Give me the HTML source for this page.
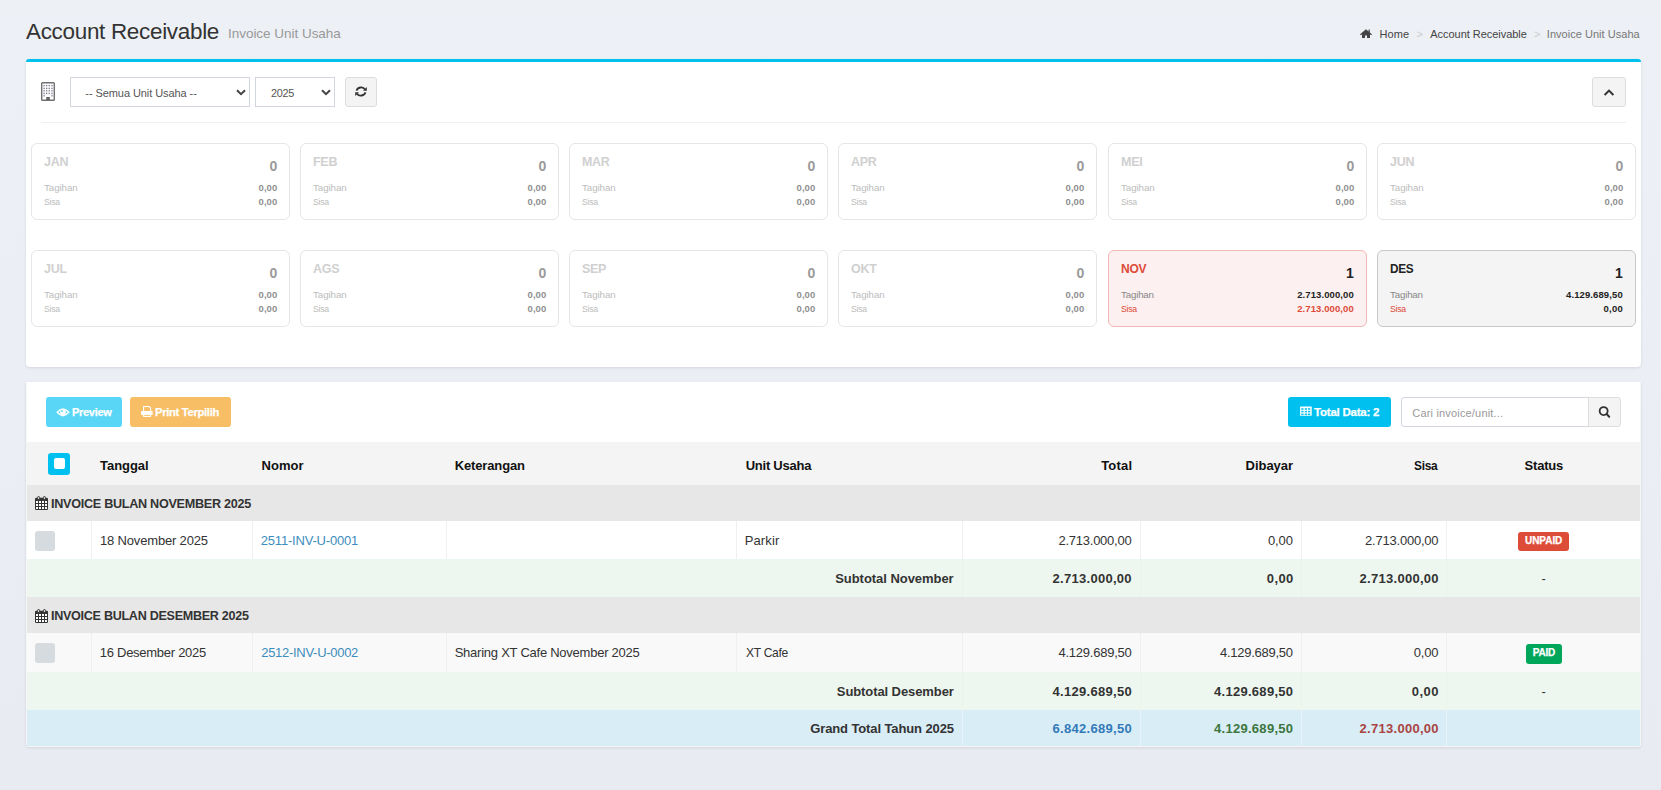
<!DOCTYPE html>
<html><head><meta charset="utf-8"><title>Account Receivable - Invoice Unit Usaha</title>
<style>
html,body{margin:0;padding:0;}
body{width:1661px;height:790px;overflow:hidden;position:relative;background:linear-gradient(to bottom,#edf0f5 0%,#ebeef5 45%,#e9ebf3 100%);font-family:"Liberation Sans", sans-serif;}
div{position:absolute;}
.t{white-space:nowrap;}
svg{position:absolute;}
</style></head><body>
<div class="t" style="left:26.30px;top:17.5px;font-size:22.5px;line-height:27.0px;color:#333;letter-spacing:-0.300px;transform:scaleX(0.9977);transform-origin:0.00px 0;">Account Receivable</div>
<div class="t" style="left:228.00px;top:25.72px;font-size:13.5px;line-height:16.2px;color:#999;letter-spacing:-0.029px;">Invoice Unit Usaha</div>
<svg style="left:1360px;top:29px" width="12" height="9" viewBox="0 0 12 9"><path d="M6 0.2 L0 5.3 L0.9 6.2 L2 5.3 V9 H5 V6.4 H7 V9 H10 V5.3 L11.1 6.2 L12 5.3 L9.8 3.4 V0.6 H8.6 V2.4 Z" fill="#444"/></svg>
<div class="t" style="left:1379.40px;top:28.39px;font-size:11px;line-height:13.2px;color:#444;letter-spacing:0.092px;">Home</div>
<div class="t" style="left:1416.50px;top:28.19px;font-size:11px;line-height:13.2px;color:#ccc;">&gt;</div>
<div class="t" style="left:1430.30px;top:28.39px;font-size:11px;line-height:13.2px;color:#444;letter-spacing:-0.041px;">Account Receivable</div>
<div class="t" style="left:1534.00px;top:28.19px;font-size:11px;line-height:13.2px;color:#ccc;">&gt;</div>
<div class="t" style="left:1546.80px;top:28.39px;font-size:11px;line-height:13.2px;color:#777;letter-spacing:0.035px;">Invoice Unit Usaha</div>
<div style="position:absolute;left:26px;top:59px;width:1615px;height:308px;background:#fff;border-top:3px solid #00c0ef;border-radius:3px 3px 4px 4px;box-shadow:0 1px 3px rgba(0,0,0,0.1);box-sizing:border-box;"></div>
<svg style="left:41px;top:82px" width="14" height="19" viewBox="0 0 14 19"><rect x="0.7" y="0.75" width="12.6" height="17.5" rx="0.8" fill="#fff" stroke="#707070" stroke-width="1.4"/><rect x="2.45" y="2.90" width="1.3" height="1.4" fill="#7a7a92"/><rect x="5.05" y="2.90" width="1.3" height="1.4" fill="#7a7a92"/><rect x="7.55" y="2.90" width="1.3" height="1.4" fill="#7a7a92"/><rect x="10.35" y="2.90" width="1.3" height="1.4" fill="#7a7a92"/><rect x="2.45" y="5.70" width="1.3" height="1.4" fill="#7a7a92"/><rect x="5.05" y="5.70" width="1.3" height="1.4" fill="#7a7a92"/><rect x="7.55" y="5.70" width="1.3" height="1.4" fill="#7a7a92"/><rect x="10.35" y="5.70" width="1.3" height="1.4" fill="#7a7a92"/><rect x="2.45" y="8.10" width="1.3" height="1.4" fill="#7a7a92"/><rect x="5.05" y="8.10" width="1.3" height="1.4" fill="#7a7a92"/><rect x="7.55" y="8.10" width="1.3" height="1.4" fill="#7a7a92"/><rect x="10.35" y="8.10" width="1.3" height="1.4" fill="#7a7a92"/><rect x="2.45" y="10.70" width="1.3" height="1.4" fill="#7a7a92"/><rect x="5.05" y="10.70" width="1.3" height="1.4" fill="#7a7a92"/><rect x="7.55" y="10.70" width="1.3" height="1.4" fill="#7a7a92"/><rect x="10.35" y="10.70" width="1.3" height="1.4" fill="#7a7a92"/><rect x="2.45" y="13.10" width="1.3" height="1.4" fill="#7a7a92"/><rect x="10.35" y="13.10" width="1.3" height="1.4" fill="#7a7a92"/><rect x="5.2" y="15" width="3.7" height="3.2" fill="#666"/></svg>
<div style="position:absolute;left:70px;top:77px;width:180px;height:30px;background:#fff;border:1px solid #d2d6de;box-sizing:border-box;"></div>
<div class="t" style="left:85.30px;top:86.59px;font-size:11px;line-height:13.2px;color:#555;letter-spacing:-0.073px;">-- Semua Unit Usaha --</div>
<svg style="left:236px;top:89px" width="10" height="7" viewBox="0 0 10 7"><path d="M1 1.2 L5 5.2 L9 1.2" fill="none" stroke="#444" stroke-width="2"/></svg>
<div style="position:absolute;left:255px;top:77px;width:80px;height:30px;background:#fff;border:1px solid #d2d6de;box-sizing:border-box;"></div>
<div class="t" style="left:270.50px;top:86.59px;font-size:11px;line-height:13.2px;color:#555;letter-spacing:-0.300px;transform:scaleX(0.9892);transform-origin:0.00px 0;">2025</div>
<svg style="left:321px;top:89px" width="10" height="7" viewBox="0 0 10 7"><path d="M1 1.2 L5 5.2 L9 1.2" fill="none" stroke="#444" stroke-width="2"/></svg>
<div style="position:absolute;left:345px;top:77px;width:32px;height:30px;background:#f4f4f4;border:1px solid #ddd;border-radius:3px;box-sizing:border-box;"></div>
<svg style="left:355px;top:86px" width="12" height="11" viewBox="0 0 12 11"><path d="M1.6 4.6 C2.4 1.2 8 0 9.9 3.4" fill="none" stroke="#333" stroke-width="1.9"/><path d="M11.8 0.9 L11.8 4.7 L8 4.7 Z" fill="#333"/><path d="M10.4 6.4 C9.6 9.8 4 11 2.1 7.6" fill="none" stroke="#333" stroke-width="1.9"/><path d="M0.2 10.1 L0.2 6.3 L4 6.3 Z" fill="#333"/></svg>
<div style="position:absolute;left:1592px;top:77px;width:34px;height:30px;background:#f4f4f4;border:1px solid #ddd;border-radius:3px;box-sizing:border-box;"></div>
<svg style="left:1603px;top:88px" width="12" height="9" viewBox="0 0 12 9"><path d="M1.6 7 L6 2.6 L10.4 7" fill="none" stroke="#333" stroke-width="2"/></svg>
<div style="position:absolute;left:41px;top:122px;width:1585px;height:1px;background:#f0f0f0;"></div>
<div style="position:absolute;left:31px;top:143px;width:259px;height:77px;background:#fff;border:1px solid #e6e6e6;border-radius:6px;box-sizing:border-box;"></div>
<div class="t" style="left:44.00px;top:153.7px;font-size:13px;line-height:15.6px;font-weight:700;color:#d0d0d0;letter-spacing:-0.300px;transform:scaleX(0.9625);transform-origin:0.00px 0;">JAN</div>
<div class="t" style="left:269.40px;top:157.55px;font-size:14px;line-height:16.8px;font-weight:700;color:#9a9a9a;">0</div>
<div class="t" style="left:44.00px;top:181.87px;font-size:9.75px;line-height:11.7px;color:#bcbcbc;letter-spacing:-0.072px;">Tagihan</div>
<div class="t" style="left:258.50px;top:182.11px;font-size:9.5px;line-height:11.4px;font-weight:700;color:#8f8f8f;letter-spacing:0.098px;">0,00</div>
<div class="t" style="left:44.00px;top:195.87px;font-size:9.75px;line-height:11.7px;color:#bcbcbc;letter-spacing:-0.300px;transform:scaleX(0.8904);transform-origin:0.00px 0;">Sisa</div>
<div class="t" style="left:258.50px;top:196.11px;font-size:9.5px;line-height:11.4px;font-weight:700;color:#8f8f8f;letter-spacing:0.098px;">0,00</div>
<div style="position:absolute;left:300px;top:143px;width:259px;height:77px;background:#fff;border:1px solid #e6e6e6;border-radius:6px;box-sizing:border-box;"></div>
<div class="t" style="left:313.00px;top:153.7px;font-size:13px;line-height:15.6px;font-weight:700;color:#d0d0d0;letter-spacing:-0.300px;transform:scaleX(0.9625);transform-origin:0.00px 0;">FEB</div>
<div class="t" style="left:538.40px;top:157.55px;font-size:14px;line-height:16.8px;font-weight:700;color:#9a9a9a;">0</div>
<div class="t" style="left:313.00px;top:181.87px;font-size:9.75px;line-height:11.7px;color:#bcbcbc;letter-spacing:-0.072px;">Tagihan</div>
<div class="t" style="left:527.50px;top:182.11px;font-size:9.5px;line-height:11.4px;font-weight:700;color:#8f8f8f;letter-spacing:0.098px;">0,00</div>
<div class="t" style="left:313.00px;top:195.87px;font-size:9.75px;line-height:11.7px;color:#bcbcbc;letter-spacing:-0.300px;transform:scaleX(0.8904);transform-origin:0.00px 0;">Sisa</div>
<div class="t" style="left:527.50px;top:196.11px;font-size:9.5px;line-height:11.4px;font-weight:700;color:#8f8f8f;letter-spacing:0.098px;">0,00</div>
<div style="position:absolute;left:569px;top:143px;width:259px;height:77px;background:#fff;border:1px solid #e6e6e6;border-radius:6px;box-sizing:border-box;"></div>
<div class="t" style="left:582.00px;top:153.7px;font-size:13px;line-height:15.6px;font-weight:700;color:#d0d0d0;letter-spacing:-0.300px;transform:scaleX(0.9590);transform-origin:0.00px 0;">MAR</div>
<div class="t" style="left:807.40px;top:157.55px;font-size:14px;line-height:16.8px;font-weight:700;color:#9a9a9a;">0</div>
<div class="t" style="left:582.00px;top:181.87px;font-size:9.75px;line-height:11.7px;color:#bcbcbc;letter-spacing:-0.072px;">Tagihan</div>
<div class="t" style="left:796.50px;top:182.11px;font-size:9.5px;line-height:11.4px;font-weight:700;color:#8f8f8f;letter-spacing:0.098px;">0,00</div>
<div class="t" style="left:582.00px;top:195.87px;font-size:9.75px;line-height:11.7px;color:#bcbcbc;letter-spacing:-0.300px;transform:scaleX(0.8904);transform-origin:0.00px 0;">Sisa</div>
<div class="t" style="left:796.50px;top:196.11px;font-size:9.5px;line-height:11.4px;font-weight:700;color:#8f8f8f;letter-spacing:0.098px;">0,00</div>
<div style="position:absolute;left:838px;top:143px;width:259px;height:77px;background:#fff;border:1px solid #e6e6e6;border-radius:6px;box-sizing:border-box;"></div>
<div class="t" style="left:851.00px;top:153.7px;font-size:13px;line-height:15.6px;font-weight:700;color:#d0d0d0;letter-spacing:-0.300px;transform:scaleX(0.9605);transform-origin:0.00px 0;">APR</div>
<div class="t" style="left:1076.40px;top:157.55px;font-size:14px;line-height:16.8px;font-weight:700;color:#9a9a9a;">0</div>
<div class="t" style="left:851.00px;top:181.87px;font-size:9.75px;line-height:11.7px;color:#bcbcbc;letter-spacing:-0.072px;">Tagihan</div>
<div class="t" style="left:1065.50px;top:182.11px;font-size:9.5px;line-height:11.4px;font-weight:700;color:#8f8f8f;letter-spacing:0.098px;">0,00</div>
<div class="t" style="left:851.00px;top:195.87px;font-size:9.75px;line-height:11.7px;color:#bcbcbc;letter-spacing:-0.300px;transform:scaleX(0.8904);transform-origin:0.00px 0;">Sisa</div>
<div class="t" style="left:1065.50px;top:196.11px;font-size:9.5px;line-height:11.4px;font-weight:700;color:#8f8f8f;letter-spacing:0.098px;">0,00</div>
<div style="position:absolute;left:1108px;top:143px;width:259px;height:77px;background:#fff;border:1px solid #e6e6e6;border-radius:6px;box-sizing:border-box;"></div>
<div class="t" style="left:1121.00px;top:153.7px;font-size:13px;line-height:15.6px;font-weight:700;color:#d0d0d0;letter-spacing:-0.300px;transform:scaleX(0.9658);transform-origin:0.00px 0;">MEI</div>
<div class="t" style="left:1346.40px;top:157.55px;font-size:14px;line-height:16.8px;font-weight:700;color:#9a9a9a;">0</div>
<div class="t" style="left:1121.00px;top:181.87px;font-size:9.75px;line-height:11.7px;color:#bcbcbc;letter-spacing:-0.072px;">Tagihan</div>
<div class="t" style="left:1335.50px;top:182.11px;font-size:9.5px;line-height:11.4px;font-weight:700;color:#8f8f8f;letter-spacing:0.098px;">0,00</div>
<div class="t" style="left:1121.00px;top:195.87px;font-size:9.75px;line-height:11.7px;color:#bcbcbc;letter-spacing:-0.300px;transform:scaleX(0.8904);transform-origin:0.00px 0;">Sisa</div>
<div class="t" style="left:1335.50px;top:196.11px;font-size:9.5px;line-height:11.4px;font-weight:700;color:#8f8f8f;letter-spacing:0.098px;">0,00</div>
<div style="position:absolute;left:1377px;top:143px;width:259px;height:77px;background:#fff;border:1px solid #e6e6e6;border-radius:6px;box-sizing:border-box;"></div>
<div class="t" style="left:1390.00px;top:153.7px;font-size:13px;line-height:15.6px;font-weight:700;color:#d0d0d0;letter-spacing:-0.300px;transform:scaleX(0.9625);transform-origin:0.00px 0;">JUN</div>
<div class="t" style="left:1615.40px;top:157.55px;font-size:14px;line-height:16.8px;font-weight:700;color:#9a9a9a;">0</div>
<div class="t" style="left:1390.00px;top:181.87px;font-size:9.75px;line-height:11.7px;color:#bcbcbc;letter-spacing:-0.072px;">Tagihan</div>
<div class="t" style="left:1604.50px;top:182.11px;font-size:9.5px;line-height:11.4px;font-weight:700;color:#8f8f8f;letter-spacing:0.098px;">0,00</div>
<div class="t" style="left:1390.00px;top:195.87px;font-size:9.75px;line-height:11.7px;color:#bcbcbc;letter-spacing:-0.300px;transform:scaleX(0.8904);transform-origin:0.00px 0;">Sisa</div>
<div class="t" style="left:1604.50px;top:196.11px;font-size:9.5px;line-height:11.4px;font-weight:700;color:#8f8f8f;letter-spacing:0.098px;">0,00</div>
<div style="position:absolute;left:31px;top:250px;width:259px;height:77px;background:#fff;border:1px solid #e6e6e6;border-radius:6px;box-sizing:border-box;"></div>
<div class="t" style="left:44.00px;top:260.7px;font-size:13px;line-height:15.6px;font-weight:700;color:#d0d0d0;letter-spacing:-0.300px;transform:scaleX(0.9635);transform-origin:0.00px 0;">JUL</div>
<div class="t" style="left:269.40px;top:264.55px;font-size:14px;line-height:16.8px;font-weight:700;color:#9a9a9a;">0</div>
<div class="t" style="left:44.00px;top:288.87px;font-size:9.75px;line-height:11.7px;color:#bcbcbc;letter-spacing:-0.072px;">Tagihan</div>
<div class="t" style="left:258.50px;top:289.11px;font-size:9.5px;line-height:11.4px;font-weight:700;color:#8f8f8f;letter-spacing:0.098px;">0,00</div>
<div class="t" style="left:44.00px;top:302.87px;font-size:9.75px;line-height:11.7px;color:#bcbcbc;letter-spacing:-0.300px;transform:scaleX(0.8904);transform-origin:0.00px 0;">Sisa</div>
<div class="t" style="left:258.50px;top:303.11px;font-size:9.5px;line-height:11.4px;font-weight:700;color:#8f8f8f;letter-spacing:0.098px;">0,00</div>
<div style="position:absolute;left:300px;top:250px;width:259px;height:77px;background:#fff;border:1px solid #e6e6e6;border-radius:6px;box-sizing:border-box;"></div>
<div class="t" style="left:313.00px;top:260.7px;font-size:13px;line-height:15.6px;font-weight:700;color:#d0d0d0;letter-spacing:-0.300px;transform:scaleX(0.9602);transform-origin:0.00px 0;">AGS</div>
<div class="t" style="left:538.40px;top:264.55px;font-size:14px;line-height:16.8px;font-weight:700;color:#9a9a9a;">0</div>
<div class="t" style="left:313.00px;top:288.87px;font-size:9.75px;line-height:11.7px;color:#bcbcbc;letter-spacing:-0.072px;">Tagihan</div>
<div class="t" style="left:527.50px;top:289.11px;font-size:9.5px;line-height:11.4px;font-weight:700;color:#8f8f8f;letter-spacing:0.098px;">0,00</div>
<div class="t" style="left:313.00px;top:302.87px;font-size:9.75px;line-height:11.7px;color:#bcbcbc;letter-spacing:-0.300px;transform:scaleX(0.8904);transform-origin:0.00px 0;">Sisa</div>
<div class="t" style="left:527.50px;top:303.11px;font-size:9.5px;line-height:11.4px;font-weight:700;color:#8f8f8f;letter-spacing:0.098px;">0,00</div>
<div style="position:absolute;left:569px;top:250px;width:259px;height:77px;background:#fff;border:1px solid #e6e6e6;border-radius:6px;box-sizing:border-box;"></div>
<div class="t" style="left:582.00px;top:260.7px;font-size:13px;line-height:15.6px;font-weight:700;color:#d0d0d0;letter-spacing:-0.300px;transform:scaleX(0.9619);transform-origin:0.00px 0;">SEP</div>
<div class="t" style="left:807.40px;top:264.55px;font-size:14px;line-height:16.8px;font-weight:700;color:#9a9a9a;">0</div>
<div class="t" style="left:582.00px;top:288.87px;font-size:9.75px;line-height:11.7px;color:#bcbcbc;letter-spacing:-0.072px;">Tagihan</div>
<div class="t" style="left:796.50px;top:289.11px;font-size:9.5px;line-height:11.4px;font-weight:700;color:#8f8f8f;letter-spacing:0.098px;">0,00</div>
<div class="t" style="left:582.00px;top:302.87px;font-size:9.75px;line-height:11.7px;color:#bcbcbc;letter-spacing:-0.300px;transform:scaleX(0.8904);transform-origin:0.00px 0;">Sisa</div>
<div class="t" style="left:796.50px;top:303.11px;font-size:9.5px;line-height:11.4px;font-weight:700;color:#8f8f8f;letter-spacing:0.098px;">0,00</div>
<div style="position:absolute;left:838px;top:250px;width:259px;height:77px;background:#fff;border:1px solid #e6e6e6;border-radius:6px;box-sizing:border-box;"></div>
<div class="t" style="left:851.00px;top:260.7px;font-size:13px;line-height:15.6px;font-weight:700;color:#d0d0d0;letter-spacing:-0.300px;transform:scaleX(0.9610);transform-origin:0.00px 0;">OKT</div>
<div class="t" style="left:1076.40px;top:264.55px;font-size:14px;line-height:16.8px;font-weight:700;color:#9a9a9a;">0</div>
<div class="t" style="left:851.00px;top:288.87px;font-size:9.75px;line-height:11.7px;color:#bcbcbc;letter-spacing:-0.072px;">Tagihan</div>
<div class="t" style="left:1065.50px;top:289.11px;font-size:9.5px;line-height:11.4px;font-weight:700;color:#8f8f8f;letter-spacing:0.098px;">0,00</div>
<div class="t" style="left:851.00px;top:302.87px;font-size:9.75px;line-height:11.7px;color:#bcbcbc;letter-spacing:-0.300px;transform:scaleX(0.8904);transform-origin:0.00px 0;">Sisa</div>
<div class="t" style="left:1065.50px;top:303.11px;font-size:9.5px;line-height:11.4px;font-weight:700;color:#8f8f8f;letter-spacing:0.098px;">0,00</div>
<div style="position:absolute;left:1108px;top:250px;width:259px;height:77px;background:#fcf0f0;border:1px solid #f2b8b5;border-radius:6px;box-sizing:border-box;"></div>
<div class="t" style="left:1121.00px;top:260.7px;font-size:13px;line-height:15.6px;font-weight:700;color:#dd4b39;letter-spacing:-0.300px;transform:scaleX(0.9247);transform-origin:0.00px 0;">NOV</div>
<div class="t" style="left:1346.10px;top:264.55px;font-size:14px;line-height:16.8px;font-weight:700;color:#222;">1</div>
<div class="t" style="left:1121.00px;top:288.87px;font-size:9.75px;line-height:11.7px;color:#888;letter-spacing:-0.189px;">Tagihan</div>
<div class="t" style="left:1297.20px;top:289.11px;font-size:9.5px;line-height:11.4px;font-weight:700;color:#222;letter-spacing:0.092px;">2.713.000,00</div>
<div class="t" style="left:1121.00px;top:302.87px;font-size:9.75px;line-height:11.7px;color:#dd4b39;letter-spacing:-0.300px;transform:scaleX(0.8904);transform-origin:0.00px 0;">Sisa</div>
<div class="t" style="left:1297.20px;top:303.11px;font-size:9.5px;line-height:11.4px;font-weight:700;color:#dd4b39;letter-spacing:0.092px;">2.713.000,00</div>
<div style="position:absolute;left:1377px;top:250px;width:259px;height:77px;background:#f4f4f4;border:1px solid #c8c8c8;border-radius:6px;box-sizing:border-box;"></div>
<div class="t" style="left:1390.00px;top:260.7px;font-size:13px;line-height:15.6px;font-weight:700;color:#222;letter-spacing:-0.300px;transform:scaleX(0.9071);transform-origin:0.00px 0;">DES</div>
<div class="t" style="left:1615.10px;top:264.55px;font-size:14px;line-height:16.8px;font-weight:700;color:#222;">1</div>
<div class="t" style="left:1390.00px;top:288.87px;font-size:9.75px;line-height:11.7px;color:#888;letter-spacing:-0.189px;">Tagihan</div>
<div class="t" style="left:1566.00px;top:289.11px;font-size:9.5px;line-height:11.4px;font-weight:700;color:#222;letter-spacing:0.110px;">4.129.689,50</div>
<div class="t" style="left:1390.00px;top:302.87px;font-size:9.75px;line-height:11.7px;color:#dd4b39;letter-spacing:-0.300px;transform:scaleX(0.8904);transform-origin:0.00px 0;">Sisa</div>
<div class="t" style="left:1603.50px;top:303.11px;font-size:9.5px;line-height:11.4px;font-weight:700;color:#222;letter-spacing:0.231px;">0,00</div>
<div style="position:absolute;left:26px;top:382px;width:1615px;height:365px;background:#fff;border:1px solid #f6f6f6;border-top-color:#fff;border-radius:0 0 3px 3px;box-shadow:0 1px 3px rgba(0,0,0,0.1);box-sizing:border-box;"></div>
<div style="position:absolute;left:46px;top:397px;width:76px;height:30px;background:#59d6f5;border-radius:3px;"></div>
<svg style="left:56px;top:407.5px" width="14" height="9" viewBox="0 0 14 9"><path d="M1.2 4.3 Q7 -2.4 12.8 4.3 Q7 11 1.2 4.3 Z" fill="none" stroke="#fff" stroke-width="1.5"/><circle cx="7" cy="4.3" r="2.9" fill="#fff"/><circle cx="6" cy="3.2" r="0.9" fill="#59d6f5"/></svg>
<div class="t" style="left:71.50px;top:406.32px;font-size:11.5px;line-height:13.8px;font-weight:700;-webkit-text-stroke:0.25px #fff;color:#fff;letter-spacing:-0.300px;transform:scaleX(0.9538);transform-origin:0.00px 0;">Preview</div>
<div style="position:absolute;left:130px;top:397px;width:101px;height:30px;background:#f7be65;border-radius:3px;"></div>
<svg style="left:141px;top:406px" width="12" height="11" viewBox="0 0 12 11"><path d="M2.6 5.2 V0.55 H8.1 L9.6 2.05 V5.2" fill="none" stroke="#fff" stroke-width="1.1"/><rect x="0" y="4.9" width="11.7" height="4.1" rx="0.9" fill="#fff"/><circle cx="10.1" cy="6.1" r="0.45" fill="#f7be65"/><rect x="2.6" y="8.3" width="6.9" height="2.1" fill="#f7be65" stroke="#fff" stroke-width="1.1"/></svg>
<div class="t" style="left:155.30px;top:406.32px;font-size:11.5px;line-height:13.8px;font-weight:700;-webkit-text-stroke:0.25px #fff;color:#fff;letter-spacing:-0.300px;transform:scaleX(0.9721);transform-origin:0.00px 0;">Print Terpilih</div>
<div style="position:absolute;left:1288px;top:397px;width:103px;height:30px;background:#00c0ef;border-radius:3px;"></div>
<svg style="left:1300px;top:406px" width="12" height="10" viewBox="0 0 12 10"><rect x="0.1" y="0.6" width="11.6" height="9.2" rx="0.6" fill="#fff"/><rect x="1.25" y="2.25" width="2.3" height="1.5" fill="#00c0ef"/><rect x="1.25" y="4.85" width="2.3" height="1.5" fill="#00c0ef"/><rect x="1.25" y="7.55" width="2.3" height="1.5" fill="#00c0ef"/><rect x="4.75" y="2.25" width="2.3" height="1.5" fill="#00c0ef"/><rect x="4.75" y="4.85" width="2.3" height="1.5" fill="#00c0ef"/><rect x="4.75" y="7.55" width="2.3" height="1.5" fill="#00c0ef"/><rect x="7.95" y="2.25" width="2.3" height="1.5" fill="#00c0ef"/><rect x="7.95" y="4.85" width="2.3" height="1.5" fill="#00c0ef"/><rect x="7.95" y="7.55" width="2.3" height="1.5" fill="#00c0ef"/></svg>
<div class="t" style="left:1314.10px;top:405.82px;font-size:11.5px;line-height:13.8px;font-weight:700;-webkit-text-stroke:0.25px #fff;color:#fff;letter-spacing:-0.238px;">Total Data: 2</div>
<div style="position:absolute;left:1401px;top:397px;width:188px;height:30px;background:#fff;border:1px solid #d2d6de;border-radius:3px 0 0 3px;box-sizing:border-box;"></div>
<div style="position:absolute;left:1588px;top:397px;width:33px;height:30px;background:#f4f4f4;border:1px solid #ddd;border-radius:0 3px 3px 0;box-sizing:border-box;"></div>
<div class="t" style="left:1412.30px;top:406.59px;font-size:11px;line-height:13.2px;color:#999;letter-spacing:0.175px;">Cari invoice/unit...</div>
<svg style="left:1597px;top:405px" width="14" height="14" viewBox="0 0 14 14"><circle cx="6.65" cy="6.05" r="4.0" fill="none" stroke="#333" stroke-width="1.8"/><path d="M9.6 9.0 L12.2 11.7" stroke="#333" stroke-width="2" stroke-linecap="round"/></svg>
<div style="position:absolute;left:27px;top:442px;width:1613px;height:43px;background:#f4f4f4;"></div>
<div style="position:absolute;left:27px;top:485px;width:1613px;height:36px;background:#e7e7e7;"></div>
<div style="position:absolute;left:27px;top:521px;width:1613px;height:38px;background:#fff;"></div>
<div style="position:absolute;left:27px;top:559px;width:1613px;height:38px;background:#eef7ef;"></div>
<div style="position:absolute;left:27px;top:597px;width:1613px;height:36px;background:#e7e7e7;"></div>
<div style="position:absolute;left:27px;top:633px;width:1613px;height:39px;background:#f9f9f9;"></div>
<div style="position:absolute;left:27px;top:672px;width:1613px;height:38px;background:#eef7ef;"></div>
<div style="position:absolute;left:27px;top:710px;width:1613px;height:36px;background:#d9edf7;"></div>
<div style="position:absolute;left:91px;top:521px;width:1px;height:38px;background:#f0f0f0;"></div>
<div style="position:absolute;left:252px;top:521px;width:1px;height:38px;background:#f0f0f0;"></div>
<div style="position:absolute;left:446px;top:521px;width:1px;height:38px;background:#f0f0f0;"></div>
<div style="position:absolute;left:736px;top:521px;width:1px;height:38px;background:#f0f0f0;"></div>
<div style="position:absolute;left:962px;top:521px;width:1px;height:38px;background:#f0f0f0;"></div>
<div style="position:absolute;left:1140px;top:521px;width:1px;height:38px;background:#f0f0f0;"></div>
<div style="position:absolute;left:1301px;top:521px;width:1px;height:38px;background:#f0f0f0;"></div>
<div style="position:absolute;left:1446px;top:521px;width:1px;height:38px;background:#f0f0f0;"></div>
<div style="position:absolute;left:91px;top:633px;width:1px;height:39px;background:#f0f0f0;"></div>
<div style="position:absolute;left:252px;top:633px;width:1px;height:39px;background:#f0f0f0;"></div>
<div style="position:absolute;left:446px;top:633px;width:1px;height:39px;background:#f0f0f0;"></div>
<div style="position:absolute;left:736px;top:633px;width:1px;height:39px;background:#f0f0f0;"></div>
<div style="position:absolute;left:962px;top:633px;width:1px;height:39px;background:#f0f0f0;"></div>
<div style="position:absolute;left:1140px;top:633px;width:1px;height:39px;background:#f0f0f0;"></div>
<div style="position:absolute;left:1301px;top:633px;width:1px;height:39px;background:#f0f0f0;"></div>
<div style="position:absolute;left:1446px;top:633px;width:1px;height:39px;background:#f0f0f0;"></div>
<div style="position:absolute;left:962px;top:559px;width:1px;height:38px;background:#e9f2eb;"></div>
<div style="position:absolute;left:1140px;top:559px;width:1px;height:38px;background:#e9f2eb;"></div>
<div style="position:absolute;left:1301px;top:559px;width:1px;height:38px;background:#e9f2eb;"></div>
<div style="position:absolute;left:1446px;top:559px;width:1px;height:38px;background:#e9f2eb;"></div>
<div style="position:absolute;left:962px;top:672px;width:1px;height:38px;background:#e9f2eb;"></div>
<div style="position:absolute;left:1140px;top:672px;width:1px;height:38px;background:#e9f2eb;"></div>
<div style="position:absolute;left:1301px;top:672px;width:1px;height:38px;background:#e9f2eb;"></div>
<div style="position:absolute;left:1446px;top:672px;width:1px;height:38px;background:#e9f2eb;"></div>
<div style="position:absolute;left:962px;top:710px;width:1px;height:36px;background:#e8f2f8;"></div>
<div style="position:absolute;left:1140px;top:710px;width:1px;height:36px;background:#e8f2f8;"></div>
<div style="position:absolute;left:1301px;top:710px;width:1px;height:36px;background:#e8f2f8;"></div>
<div style="position:absolute;left:1446px;top:710px;width:1px;height:36px;background:#e8f2f8;"></div>
<div style="position:absolute;left:48px;top:453px;width:22px;height:22px;background:#00c0ef;border-radius:3px;"></div>
<div style="position:absolute;left:54px;top:458px;width:11px;height:11px;background:#fff;border-radius:2px;"></div>
<div class="t" style="left:100.10px;top:457.9px;font-size:13px;line-height:15.6px;font-weight:700;color:#111;letter-spacing:-0.060px;">Tanggal</div>
<div class="t" style="left:261.60px;top:457.9px;font-size:13px;line-height:15.6px;font-weight:700;color:#111;letter-spacing:0.018px;">Nomor</div>
<div class="t" style="left:454.80px;top:457.9px;font-size:13px;line-height:15.6px;font-weight:700;color:#111;letter-spacing:-0.153px;">Keterangan</div>
<div class="t" style="left:745.70px;top:457.9px;font-size:13px;line-height:15.6px;font-weight:700;color:#111;letter-spacing:-0.241px;">Unit Usaha</div>
<div class="t" style="left:1101.20px;top:457.9px;font-size:13px;line-height:15.6px;font-weight:700;color:#111;letter-spacing:0.181px;">Total</div>
<div class="t" style="left:1245.60px;top:457.9px;font-size:13px;line-height:15.6px;font-weight:700;color:#111;letter-spacing:-0.038px;">Dibayar</div>
<div class="t" style="left:1413.50px;top:457.9px;font-size:13px;line-height:15.6px;font-weight:700;color:#111;letter-spacing:-0.300px;transform:scaleX(0.9169);transform-origin:0.00px 0;">Sisa</div>
<div class="t" style="left:1524.60px;top:457.9px;font-size:13px;line-height:15.6px;font-weight:700;color:#111;letter-spacing:-0.200px;">Status</div>
<svg style="left:35px;top:496px" width="13" height="14" viewBox="0 0 13 14"><rect x="0" y="1.8" width="13" height="12.2" rx="1.2" fill="#333"/><rect x="1" y="5" width="2" height="2" fill="#fff"/><rect x="1" y="8" width="2" height="2" fill="#fff"/><rect x="1" y="11" width="2" height="2" fill="#fff"/><rect x="4" y="5" width="2" height="2" fill="#fff"/><rect x="4" y="8" width="2" height="2" fill="#fff"/><rect x="4" y="11" width="2" height="2" fill="#fff"/><rect x="7" y="5" width="2" height="2" fill="#fff"/><rect x="7" y="8" width="2" height="2" fill="#fff"/><rect x="7" y="11" width="2" height="2" fill="#fff"/><rect x="10" y="5" width="2" height="2" fill="#fff"/><rect x="10" y="8" width="2" height="2" fill="#fff"/><rect x="10" y="11" width="2" height="2" fill="#fff"/><rect x="2.6" y="0.5" width="2" height="3" rx="1" fill="#e7e7e7" stroke="#333" stroke-width="1"/><rect x="8.4" y="0.5" width="2" height="3" rx="1" fill="#e7e7e7" stroke="#333" stroke-width="1"/></svg>
<div class="t" style="left:51.00px;top:495.5px;font-size:13px;line-height:15.6px;font-weight:700;color:#333;letter-spacing:-0.300px;transform:scaleX(0.9719);transform-origin:0.00px 0;">INVOICE BULAN NOVEMBER 2025</div>
<svg style="left:35px;top:609px" width="13" height="14" viewBox="0 0 13 14"><rect x="0" y="1.8" width="13" height="12.2" rx="1.2" fill="#333"/><rect x="1" y="5" width="2" height="2" fill="#fff"/><rect x="1" y="8" width="2" height="2" fill="#fff"/><rect x="1" y="11" width="2" height="2" fill="#fff"/><rect x="4" y="5" width="2" height="2" fill="#fff"/><rect x="4" y="8" width="2" height="2" fill="#fff"/><rect x="4" y="11" width="2" height="2" fill="#fff"/><rect x="7" y="5" width="2" height="2" fill="#fff"/><rect x="7" y="8" width="2" height="2" fill="#fff"/><rect x="7" y="11" width="2" height="2" fill="#fff"/><rect x="10" y="5" width="2" height="2" fill="#fff"/><rect x="10" y="8" width="2" height="2" fill="#fff"/><rect x="10" y="11" width="2" height="2" fill="#fff"/><rect x="2.6" y="0.5" width="2" height="3" rx="1" fill="#e7e7e7" stroke="#333" stroke-width="1"/><rect x="8.4" y="0.5" width="2" height="3" rx="1" fill="#e7e7e7" stroke="#333" stroke-width="1"/></svg>
<div class="t" style="left:51.00px;top:608.3px;font-size:13px;line-height:15.6px;font-weight:700;color:#333;letter-spacing:-0.300px;transform:scaleX(0.9675);transform-origin:0.00px 0;">INVOICE BULAN DESEMBER 2025</div>
<div style="position:absolute;left:35px;top:531px;width:20px;height:20px;background:#d5dbde;border-radius:3px;"></div>
<div class="t" style="left:100.00px;top:532.8px;font-size:13px;line-height:15.6px;color:#333;letter-spacing:-0.169px;">18 November 2025</div>
<div class="t" style="left:260.80px;top:532.8px;font-size:13px;line-height:15.6px;color:#3c8dbc;letter-spacing:-0.198px;">2511-INV-U-0001</div>
<div class="t" style="left:744.70px;top:532.8px;font-size:13px;line-height:15.6px;color:#333;letter-spacing:0.116px;">Parkir</div>
<div class="t" style="left:1058.50px;top:532.8px;font-size:13px;line-height:15.6px;color:#333;letter-spacing:-0.252px;">2.713.000,00</div>
<div class="t" style="left:1267.90px;top:532.8px;font-size:13px;line-height:15.6px;color:#333;letter-spacing:-0.057px;">0,00</div>
<div class="t" style="left:1365.10px;top:532.8px;font-size:13px;line-height:15.6px;color:#333;letter-spacing:-0.225px;">2.713.000,00</div>
<div style="position:absolute;left:1518px;top:532px;width:51px;height:19px;background:#dd4b39;border-radius:3px;"></div>
<div class="t" style="left:1525.00px;top:535.43px;font-size:10px;line-height:12.0px;font-weight:700;-webkit-text-stroke:0.25px #fff;color:#fff;letter-spacing:-0.054px;">UNPAID</div>
<div class="t" style="left:835.20px;top:571.1px;font-size:13px;line-height:15.6px;font-weight:700;color:#333;letter-spacing:-0.045px;">Subtotal November</div>
<div class="t" style="left:1052.60px;top:571.1px;font-size:13px;line-height:15.6px;font-weight:700;color:#333;letter-spacing:0.275px;">2.713.000,00</div>
<div class="t" style="left:1266.80px;top:571.1px;font-size:13px;line-height:15.6px;font-weight:700;color:#333;letter-spacing:0.376px;">0,00</div>
<div class="t" style="left:1359.60px;top:571.1px;font-size:13px;line-height:15.6px;font-weight:700;color:#333;letter-spacing:0.275px;">2.713.000,00</div>
<div class="t" style="left:1541.50px;top:571.1px;font-size:13px;line-height:15.6px;color:#333;">-</div>
<div style="position:absolute;left:35px;top:643px;width:20px;height:20px;background:#d5dbde;border-radius:3px;"></div>
<div class="t" style="left:99.80px;top:644.9px;font-size:13px;line-height:15.6px;color:#333;letter-spacing:-0.276px;">16 Desember 2025</div>
<div class="t" style="left:261.20px;top:644.9px;font-size:13px;line-height:15.6px;color:#3c8dbc;letter-spacing:-0.288px;">2512-INV-U-0002</div>
<div class="t" style="left:454.70px;top:644.9px;font-size:13px;line-height:15.6px;color:#333;letter-spacing:-0.246px;">Sharing XT Cafe November 2025</div>
<div class="t" style="left:745.60px;top:644.9px;font-size:13px;line-height:15.6px;color:#333;letter-spacing:-0.300px;transform:scaleX(0.9265);transform-origin:0.00px 0;">XT Cafe</div>
<div class="t" style="left:1058.50px;top:644.9px;font-size:13px;line-height:15.6px;color:#333;letter-spacing:-0.243px;">4.129.689,50</div>
<div class="t" style="left:1220.00px;top:644.9px;font-size:13px;line-height:15.6px;color:#333;letter-spacing:-0.261px;">4.129.689,50</div>
<div class="t" style="left:1413.70px;top:644.9px;font-size:13px;line-height:15.6px;color:#333;letter-spacing:-0.191px;">0,00</div>
<div style="position:absolute;left:1526px;top:644px;width:36px;height:20px;background:#00a65a;border-radius:3px;"></div>
<div class="t" style="left:1532.80px;top:647.43px;font-size:10px;line-height:12.0px;font-weight:700;-webkit-text-stroke:0.25px #fff;color:#fff;letter-spacing:-0.276px;">PAID</div>
<div class="t" style="left:836.80px;top:684.0px;font-size:13px;line-height:15.6px;font-weight:700;color:#333;letter-spacing:-0.088px;">Subtotal Desember</div>
<div class="t" style="left:1052.60px;top:684.0px;font-size:13px;line-height:15.6px;font-weight:700;color:#333;letter-spacing:0.293px;">4.129.689,50</div>
<div class="t" style="left:1214.00px;top:684.0px;font-size:13px;line-height:15.6px;font-weight:700;color:#333;letter-spacing:0.284px;">4.129.689,50</div>
<div class="t" style="left:1411.70px;top:684.0px;font-size:13px;line-height:15.6px;font-weight:700;color:#333;letter-spacing:0.476px;">0,00</div>
<div class="t" style="left:1541.50px;top:684.0px;font-size:13px;line-height:15.6px;color:#333;">-</div>
<div class="t" style="left:810.20px;top:720.9px;font-size:13px;line-height:15.6px;font-weight:700;color:#333;letter-spacing:-0.111px;">Grand Total Tahun 2025</div>
<div class="t" style="left:1052.60px;top:720.9px;font-size:13px;line-height:15.6px;font-weight:700;color:#337ab7;letter-spacing:0.293px;">6.842.689,50</div>
<div class="t" style="left:1214.00px;top:720.9px;font-size:13px;line-height:15.6px;font-weight:700;color:#3c763d;letter-spacing:0.284px;">4.129.689,50</div>
<div class="t" style="left:1359.60px;top:720.9px;font-size:13px;line-height:15.6px;font-weight:700;color:#a94442;letter-spacing:0.275px;">2.713.000,00</div>
</body></html>
